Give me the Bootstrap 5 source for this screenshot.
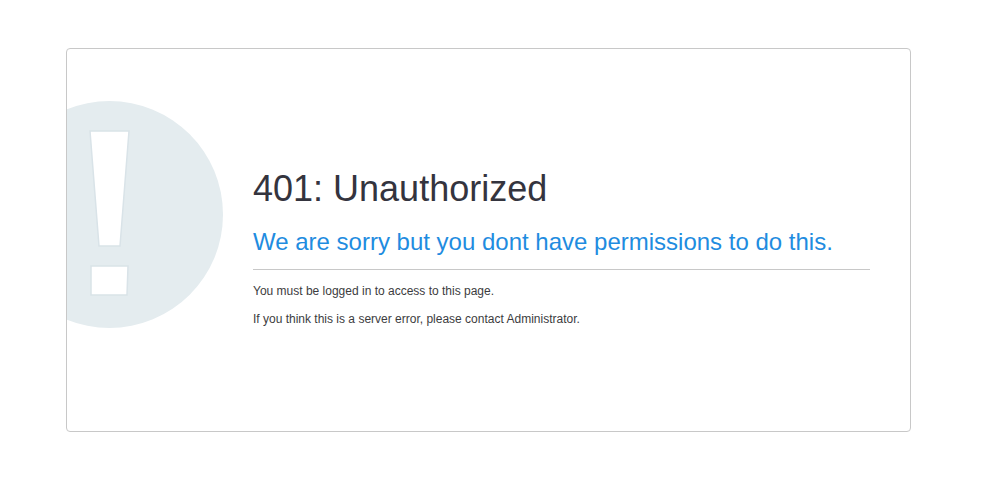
<!DOCTYPE html>
<html lang="en">
<head>
<meta charset="utf-8">
<meta name="viewport" content="width=device-width, initial-scale=1">
<title>401: Unauthorized</title>
<link href="https://cdn.jsdelivr.net/npm/bootstrap@5.3.0/dist/css/bootstrap.min.css" rel="stylesheet">
<style>
body { font-family: "Liberation Sans", Arial, sans-serif; font-size: 12px; line-height: 18px; color: #3c3c40; }
.error-page { padding: 48px 91px 48px 66px; }
.error-box { min-height: 384px; border: 1px solid #c8c8c8; border-radius: 4px; padding-right: 40px; gap: 30px; }
.error-icon { width: 156px; height: 228px; margin-top: 52px; }
.error-text { padding-top: 120px; }
.error-title { font-size: 36px; line-height: 40px; color: #34343e; margin-bottom: 19px; }
.error-lead { font-size: 24px; line-height: 28px; color: #1f8ce0; padding-bottom: 13px; border-bottom: 1px solid #c8c8c8; margin-bottom: 12px; }
.error-text p { margin-bottom: 10px; }
</style>
</head>
<body>
<main class="error-page">
  <section class="error-box d-flex align-items-start overflow-hidden">
    <svg class="error-icon flex-shrink-0" viewBox="0 0 156 228" aria-hidden="true">
      <circle cx="42.500" cy="113.500" r="113.500" fill="#e4ecef"/>
      <path d="M23 30H62L53 145H32Z M24 165H61L60 194H24Z" fill="#fff" stroke="#d9e3e8" stroke-width="1.500"/>
    </svg>
    <div class="error-text flex-grow-1">
      <h1 class="error-title fw-normal">401: Unauthorized</h1>
      <h2 class="error-lead fw-normal">We are sorry but you dont have permissions to do this.</h2>
      <p>You must be logged in to access to this page.</p>
      <p>If you think this is a server error, please contact Administrator.</p>
    </div>
  </section>
</main>
<script src="https://cdn.jsdelivr.net/npm/bootstrap@5.3.0/dist/js/bootstrap.bundle.min.js"></script>
</body>
</html>
